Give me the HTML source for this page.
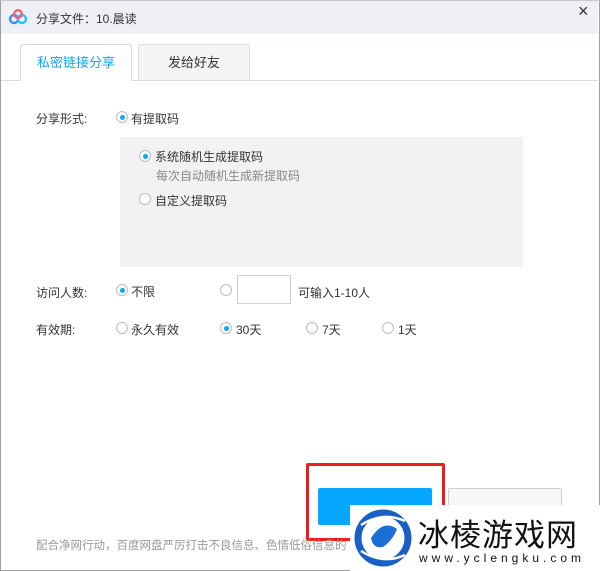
<!DOCTYPE html>
<html><head><meta charset="utf-8"><style>
*{margin:0;padding:0;box-sizing:border-box}
body{width:600px;height:571px;overflow:hidden;background:#fff;font-family:"Liberation Sans","Noto Sans CJK SC",sans-serif;font-size:12px;color:#333;position:relative}
.a{position:absolute;white-space:nowrap}
.r{position:absolute;width:12px;height:12px;border:1px solid #b8bcc4;border-radius:50%;background:#fff}
.r.on::after{content:"";position:absolute;left:2.5px;top:2.5px;width:5px;height:5px;border-radius:50%;background:#06a7ff}
</style></head><body>
<div class="a" style="left:0;top:0;width:600px;height:571px;border:1px solid #a0a0a0;border-top:1px solid #c8c8c8"></div>
<div class="a" style="left:1px;top:1px;width:597px;height:33px;background:#eef0f5"></div>
<svg class="a" style="left:8px;top:9px" width="20" height="16" viewBox="0 0 20 16"><circle cx="6" cy="10" r="4" fill="none" stroke="#3a8ef6" stroke-width="2.4"/><circle cx="14" cy="10" r="4" fill="none" stroke="#21c8f6" stroke-width="2.4"/><circle cx="10" cy="5" r="3.8" fill="none" stroke="#f25f7a" stroke-width="2.4"/></svg>
<div class="a" style="left:36px;top:10px;font-size:12px;color:#333">分享文件：10.晨读</div>
<div class="a" style="left:578px;top:1px;font-size:18px;color:#333">×</div>
<div class="a" style="left:1px;top:80px;width:597px;height:1px;background:#dcdcdc"></div>
<div class="a" style="left:20px;top:44px;width:112px;height:37px;border:1px solid #dcdcdc;border-bottom:none;background:#fff;border-radius:3px 3px 0 0;color:#06a7ff;font-size:13px;text-align:center;line-height:36px">私密链接分享</div>
<div class="a" style="left:138px;top:44px;width:112px;height:36px;border:1px solid #dcdcdc;border-bottom:none;background:#f5f5f5;border-radius:3px 3px 0 0;color:#333;font-size:13px;text-align:center;line-height:36px">发给好友</div>
<div class="a" style="left:36px;top:110px">分享形式:</div>
<div class="r on" style="left:116px;top:111px"></div><div class="a" style="left:131px;top:110px">有提取码</div>
<div class="a" style="left:120px;top:137px;width:403px;height:130px;background:#f2f2f2"></div>
<div class="r on" style="left:139px;top:150px"></div><div class="a" style="left:155px;top:148px">系统随机生成提取码</div>
<div class="a" style="left:156px;top:167px;color:#888">每次自动随机生成新提取码</div>
<div class="r" style="left:139px;top:193px"></div><div class="a" style="left:155px;top:192px">自定义提取码</div>
<div class="a" style="left:36px;top:284px">访问人数:</div>
<div class="r on" style="left:116px;top:284px"></div><div class="a" style="left:131px;top:283px">不限</div>
<div class="r" style="left:220px;top:284px"></div>
<div class="a" style="left:237px;top:275px;width:54px;height:29px;border:1px solid #c8d0dc;background:#fff"></div>
<div class="a" style="left:298px;top:284px">可输入1-10人</div>
<div class="a" style="left:36px;top:321px">有效期:</div>
<div class="r" style="left:116px;top:322px"></div><div class="a" style="left:131px;top:321px">永久有效</div>
<div class="r on" style="left:220px;top:322px"></div><div class="a" style="left:236px;top:321px">30天</div>
<div class="r" style="left:306px;top:322px"></div><div class="a" style="left:322px;top:321px">7天</div>
<div class="r" style="left:382px;top:322px"></div><div class="a" style="left:398px;top:321px">1天</div>
<div class="a" style="left:306px;top:463px;width:139px;height:78px;border:3px solid #ee1c1c;border-radius:2px"></div>
<div class="a" style="left:318px;top:488px;width:114px;height:37px;background:#06a7ff;border-radius:2px"></div>
<div class="a" style="left:448px;top:488px;width:114px;height:37px;background:#f7f7f7;border:1px solid #d0d0d0;border-radius:2px"></div>
<div class="a" style="left:36px;top:537px;color:#999;font-size:11.5px">配合净网行动，百度网盘严厉打击不良信息、色情低俗信息的</div>
<div class="a" style="left:350px;top:505px;width:250px;height:66px;background:#fff"></div>
<svg class="a" style="left:353px;top:507px" width="60" height="62" viewBox="0 0 60 62"><circle cx="30" cy="31" r="25" fill="none" stroke="#1a5fc4" stroke-width="7"/><path d="M18 31 Q30 12 44 22 Q40 33 30 40 Q20 42 18 31Z" fill="#1a6fd4"/><path d="M8 18 Q30 4 52 14" stroke="#fff" stroke-width="2.5" fill="none"/><path d="M8 44 Q30 58 52 48" stroke="#fff" stroke-width="2.5" fill="none"/></svg>
<div class="a" style="left:418px;top:510px;font-size:31px;color:#111;letter-spacing:1px;font-family:'Noto Sans CJK SC',sans-serif">冰棱游戏网</div>
<div class="a" style="left:419px;top:551px;font-size:12px;color:#111;letter-spacing:4px">www.yclengku.com</div>
</body></html>
